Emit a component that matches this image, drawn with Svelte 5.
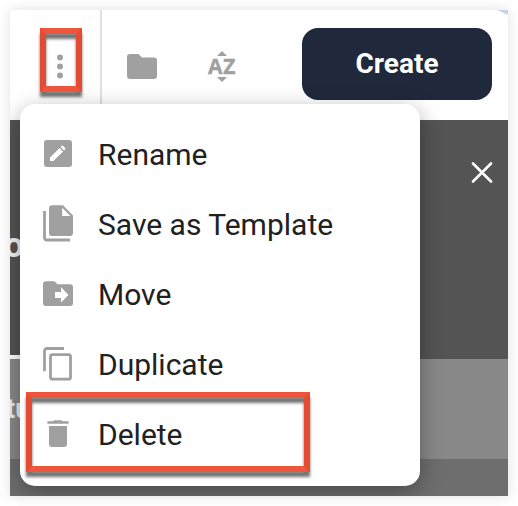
<script lang="ts">
  const items = ["Rename", "Save as Template", "Move", "Duplicate", "Delete"];
</script>

<div class="app">
  <header>
    <div class="more">
      <button class="dots" aria-label="More actions">
        <svg width="30" height="52" viewBox="0 0 30 52">
          <circle cx="14" cy="23.5" r="3" />
          <circle cx="14" cy="32.5" r="3" />
          <circle cx="14" cy="41.5" r="3" />
        </svg>
      </button>
    </div>
    <div class="tools">
      <svg width="30" height="26" viewBox="0 0 30 26">
        <path d="M3 0h8.500l3.500 3.500h12a3 3 0 0 1 3 3V22a3 3 0 0 1-3 3H3a3 3 0 0 1-3-3V3a3 3 0 0 1 3-3z" />
      </svg>
      <div class="sort">
        <svg width="10" height="5" viewBox="0 0 10 5"><path d="M5 0l5 5H0z" /></svg>
        <span>AZ</span>
        <svg width="10" height="5" viewBox="0 0 10 5"><path d="M0 0h10L5 5z" /></svg>
      </div>
    </div>
    <button class="create">Create</button>
  </header>

  <section class="hero">
    <span class="title">o</span>
    <svg class="close" width="22" height="22" viewBox="0 0 22 22">
      <path d="M2 1.500l18 18M20 1.500L2 19.500" />
    </svg>
  </section>
  <section class="status"><span>tu</span></section>
  <section class="rest"></section>

  <div class="menu" role="menu">
    {#each items as item}
      <div class="item" role="menuitem" tabindex="-1">
        <svg width="36" height="40" viewBox="0 0 36 40">
          {#if item === "Rename"}
            <path d="M7 5h22a3 3 0 0 1 3 3v21a3 3 0 0 1-3 3H7a3 3 0 0 1-3-3V8a3 3 0 0 1 3-3z" />
            <path class="cut" d="M10 22.600L19.600 13l3.400 3.400-9.600 9.600H10zM20.600 12l1-1q.8-.8 1.600 0l1.800 1.800q.8.8 0 1.600l-1 1z" />
          {:else if item === "Save as Template"}
            <path d="M12 .3h11l10 10.200V28a3 3 0 0 1-3 3H12a3 3 0 0 1-3-3V3.300a3 3 0 0 1 3-3z" />
            <path class="cut" d="M22.200 2.800V11h8.200z" />
            <path class="line" d="M4.500 6v26.500a2.500 2.500 0 0 0 2.500 2.500h23" />
          {:else if item === "Move"}
            <path d="M6 6.300h8.500l3 3H30a3 3 0 0 1 3 3V28a3 3 0 0 1-3 3H6a3 3 0 0 1-3-3V9.300a3 3 0 0 1 3-3z" />
            <path class="cut" d="M15 17h6v-5l7.500 8-7.500 7.500V23h-6z" />
          {:else if item === "Duplicate"}
            <path class="line" d="M4.500 26.300V6A2.500 2.500 0 0 1 7 3.500h17" />
            <rect class="line" x="10.500" y="9.600" width="20" height="24.600" rx="2" />
          {:else}
            <path d="M9 11h18v18a3 3 0 0 1-3 3H12a3 3 0 0 1-3-3zM8.600 6.200H13l1.500-1h7l1.500 1h4.400q1.500 0 1.500 1.300t-1.500 1.300H8.600Q7.100 8.800 7.100 7.500t1.500-1.300z" />
          {/if}
        </svg>
        <span>{item}</span>
      </div>
    {/each}
  </div>
  <div class="highlight small"></div>
  <div class="highlight large"></div>
</div>

<style>
  :global(body) {
    background: #fff;
    overflow: hidden;
  }

  .app {
    position: relative;
    display: flex;
    flex-direction: column;
    width: 498px;
    height: 486px;
    margin: 10px;
    background: #fff;
    box-shadow: 0 0 12px rgba(0, 0, 0, 0.13);
    font-family: Roboto, sans-serif;
  }

  svg {
    display: block;
    fill: #a0a0a0;
  }

  button {
    border: none;
    padding: 0;
    background: none;
    font-family: inherit;
  }

  header {
    display: flex;
    height: 110px;
    background: linear-gradient(205deg, #c9d3e4 4px, #fff 5px);
  }

  .more {
    display: flex;
    box-sizing: border-box;
    width: 92px;
    padding: 24px 0 0 36px;
    border-right: 2px solid #e0e0e0;
  }

  .dots {
    width: 30px;
    height: 52px;
  }

  .tools {
    display: flex;
    width: 200px;
  }

  .tools > svg {
    margin: 44px 0 0 25px;
  }

  .sort {
    display: flex;
    flex-direction: column;
    align-items: center;
    width: 30px;
    margin: 41px 0 0 50px;
  }

  .sort span {
    height: 21px;
    color: #a0a0a0;
    font: bold 21px/21px "Open Sans", sans-serif;
    letter-spacing: 0.6px;
    -webkit-text-stroke: 0.4px #a0a0a0;
  }

  .create {
    width: 190px;
    height: 72px;
    margin-top: 18px;
    padding-bottom: 2px;
    border-radius: 16px;
    background: #1f293b;
    color: #fff;
    font-size: 28px;
    font-weight: 700;
  }

  .hero {
    display: flex;
    justify-content: space-between;
    box-sizing: border-box;
    height: 239px;
    padding: 41px 15px 0 0;
    background: #545454;
    /* underline of the active tab, mostly behind the menu */
    background-image: linear-gradient(#fff, #fff);
    background-size: 10px 4px;
    background-position: left bottom;
    background-repeat: no-repeat;
  }

  .title {
    margin: 68px 0 0 -6px;
    color: #f4f4f4;
    font-size: 35px;
    font-weight: 700;
    line-height: 34px;
    clip-path: inset(0 0 0 6px);
  }

  .close {
    margin-top: 1px;
    fill: none;
    stroke: #fff;
    stroke-width: 2.6;
    stroke-linecap: round;
  }

  .status {
    height: 100px;
    overflow: hidden;
    background: #888;
    color: #eee;
    font-size: 27px;
    font-weight: 700;
    line-height: 100px;
  }

  .status span {
    margin-left: -4px;
  }

  .rest {
    flex: 1;
    background: #6e6e6e;
  }

  .menu {
    position: absolute;
    top: 94px;
    left: 10px;
    box-sizing: border-box;
    width: 400px;
    padding: 16px 0;
    border-radius: 15px;
    background: #fff;
    box-shadow: 0 6px 22px rgba(0, 0, 0, 0.34);
    clip-path: inset(-30px -88px -10px -10px);
  }

  .item {
    display: flex;
    align-items: center;
    gap: 22px;
    height: 70px;
    padding-left: 20px;
    color: #212121;
    font-size: 30px;
    white-space: nowrap;
  }

  .item span {
    padding-bottom: 2px;
  }

  .cut {
    fill: #fff;
  }

  .line {
    fill: none;
    stroke: #a0a0a0;
    stroke-width: 2.8;
  }

  .highlight {
    position: absolute;
    box-sizing: border-box;
    border: 6px solid;
    border-color: #ee563c #e34c32;
    filter: drop-shadow(0 5px 1.5px rgba(0, 0, 0, 0.55));
    pointer-events: none;
  }

  .small {
    top: 18px;
    left: 30px;
    width: 42px;
    height: 64px;
  }

  .large {
    top: 382px;
    left: 16px;
    width: 284px;
    height: 80px;
  }
</style>
